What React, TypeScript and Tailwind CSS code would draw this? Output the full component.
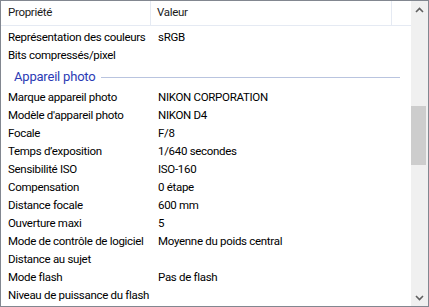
import React from 'react';

type Row = { name: string; value?: string };

const topRows: Row[] = [
  { name: 'Représentation des couleurs', value: 'sRGB' },
  { name: 'Bits compressés/pixel' },
];

const cameraRows: Row[] = [
  { name: 'Marque appareil photo', value: 'NIKON CORPORATION' },
  { name: "Modèle d'appareil photo", value: 'NIKON D4' },
  { name: 'Focale', value: 'F/8' },
  { name: 'Temps d’exposition', value: '1/640 secondes' },
  { name: 'Sensibilité ISO', value: 'ISO-160' },
  { name: 'Compensation', value: '0 étape' },
  { name: 'Distance focale', value: '600 mm' },
  { name: 'Ouverture maxi', value: '5' },
  { name: 'Mode de contrôle de logiciel', value: 'Moyenne du poids central' },
  { name: 'Distance au sujet' },
  { name: 'Mode flash', value: 'Pas de flash' },
  { name: 'Niveau de puissance du flash' },
];

function PropRow({ row }: { row: Row }) {
  return (
    <div className="flex h-[18px] shrink-0 items-center">
      <div className="w-[150px] shrink-0 pl-[7px] whitespace-nowrap">{row.name}</div>
      <div className="pl-[7px] whitespace-nowrap">{row.value}</div>
    </div>
  );
}

export default function App() {
  return (
    <div
      className="flex h-[307px] w-[429px] overflow-hidden border border-[#828790] bg-white text-[11.5px] tracking-[-0.3px] text-black"
      style={{ fontFamily: 'Roboto, "Liberation Sans", sans-serif' }}
    >
      {/* liste des propriétés */}
      <div className="flex min-w-0 flex-1 flex-col overflow-hidden">
        <div className="flex h-[25px] shrink-0 border-b border-[#e5eaf3] text-[#1a1a1a]">
          <div className="flex w-[150px] shrink-0 items-center border-r border-[#e5eaf3] pl-[7px]">
            Propriété
          </div>
          <div className="flex w-[241px] shrink-0 items-center border-r border-[#e5eaf3] pl-[6px]">
            Valeur
          </div>
          <div className="flex-1" />
        </div>

        <div className="flex flex-col pt-[3px]">
          {topRows.map((r) => (
            <PropRow key={r.name} row={r} />
          ))}

          {/* groupe */}
          <div className="flex h-[24px] shrink-0 items-center pr-[11px] pl-[13px]">
            <span className="text-[13px] tracking-[-0.2px] whitespace-nowrap text-[#2b3bb5]">
              Appareil photo
            </span>
            <div className="ml-[5px] h-px flex-1 bg-[#b9c4df]" />
          </div>

          {cameraRows.map((r) => (
            <PropRow key={r.name} row={r} />
          ))}
        </div>
      </div>

      {/* barre de défilement */}
      <div className="flex w-[17px] shrink-0 flex-col bg-[#f0f0f0]">
        <div className="flex h-[17px] items-center justify-center">
          <svg width="9" height="6" viewBox="0 0 9 6">
            <path d="M1 5 L4.5 1.5 L8 5" fill="none" stroke="#606060" strokeWidth="1.6" />
          </svg>
        </div>
        <div className="mt-[88px] h-[59px] w-[15px] bg-[#cdcdcd]" />
        <div className="flex-1" />
        <div className="flex h-[17px] items-center justify-center">
          <svg width="9" height="6" viewBox="0 0 9 6">
            <path d="M1 1 L4.5 4.5 L8 1" fill="none" stroke="#606060" strokeWidth="1.6" />
          </svg>
        </div>
      </div>
    </div>
  );
}
